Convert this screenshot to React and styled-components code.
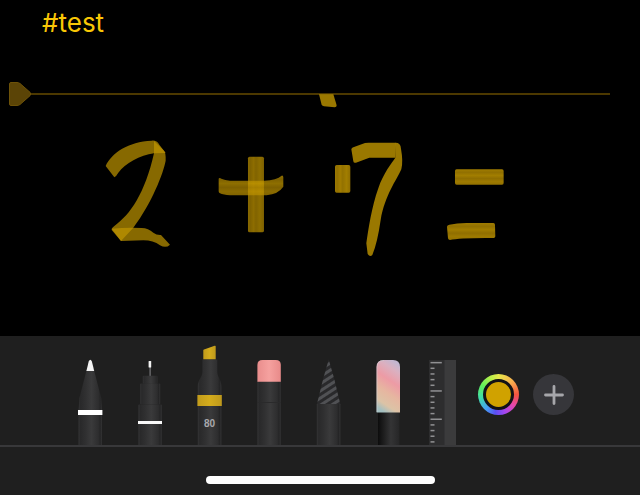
import styled, { createGlobalStyle } from 'styled-components';

const GlobalStyle = createGlobalStyle`
  * {
    box-sizing: border-box;
  }

  body {
    margin: 0;
    background: #000;
    font-family: Inter, 'Liberation Sans', sans-serif;
  }
`;

const Page = styled.div`
  display: flex;
  flex-direction: column;
  min-height: 100vh;
`;

const Note = styled.main`
  flex: 1;
  background: #000;
`;

const TagLine = styled.p`
  margin: 0;
  padding: 6px 42px 0;
  height: 82px;
  font-size: 26px;
  line-height: 34px;
`;

const Tag = styled.a`
  color: #f9c706;
  text-decoration: none;
`;

const Divider = styled.div`
  display: flex;
  align-items: center;
  height: 24px;
  padding: 0 30px 0 9px;
`;

const Handle = styled.svg`
  width: 22px;
  height: 24px;
`;

const Rule = styled.div`
  flex: 1;
  height: 2px;
  background: #4c3800;
`;

const Drawing = styled.svg`
  display: block;
  width: 100%;
  margin-top: -12px;
`;

const Toolbar = styled.div`
  display: flex;
  justify-content: center;
  align-items: center;
  padding-left: 10px;
  background: #1f1f1f;
  border-bottom: 2px solid #38383a;
`;

const Pens = styled.div`
  display: flex;
  justify-content: space-between;
  width: 326px;
  margin-right: 27px;
`;

const ToolButton = styled.button`
  display: block;
  padding: 0;
  border: 0;
  background: none;
  cursor: pointer;

  svg {
    display: block;
  }
`;

const Pickers = styled.div`
  display: flex;
  gap: 14px;
  margin: 8px 0 0 22px;
`;

const ColorButton = styled.button`
  display: grid;
  place-items: center;
  width: 41px;
  height: 41px;
  padding: 5px;
  border: 0;
  border-radius: 50%;
  background: conic-gradient(
    #e6e84a,
    #f8b04e 45deg,
    #f4553f 90deg,
    #e646a8 125deg,
    #a446f0 160deg,
    #5a50f4 190deg,
    #45a0f5 220deg,
    #40dca8 260deg,
    #62f05a 300deg,
    #b8f04a 335deg,
    #e6e84a
  );
`;

const Swatch = styled.span`
  width: 31px;
  height: 31px;
  border: 3px solid #121216;
  border-radius: 50%;
  background: ${(props) => props.$color};
`;

const AddButton = styled.button`
  display: grid;
  place-items: center;
  width: 41px;
  height: 41px;
  padding: 0;
  border: 0;
  border-radius: 50%;
  background: #36363a;
`;

const HomeArea = styled.footer`
  display: flex;
  justify-content: center;
  height: 48px;
  padding-top: 29px;
  background: #1f1f1f;
`;

const HomeIndicator = styled.div`
  width: 229px;
  height: 8px;
  border-radius: 4px;
  background: #fff;
`;

const SharedDefs = styled.svg`
  position: absolute;
  width: 0;
  height: 0;
`;

function Gradients() {
  return (
    <SharedDefs aria-hidden='true'>
      <defs>
        <linearGradient id='barrel'>
          <stop offset='0' stopColor='#343435' />
          <stop offset='0.08' stopColor='#29292a' />
          <stop offset='0.3' stopColor='#303031' />
          <stop offset='0.55' stopColor='#3a3a3b' />
          <stop offset='0.85' stopColor='#2d2d2e' />
          <stop offset='0.92' stopColor='#252526' />
          <stop offset='1' stopColor='#333334' />
        </linearGradient>
        <linearGradient id='darkBarrel'>
          <stop offset='0' stopColor='#0c0c0c' />
          <stop offset='0.6' stopColor='#343435' />
          <stop offset='1' stopColor='#262627' />
        </linearGradient>
        <linearGradient id='ink'>
          <stop offset='0' stopColor='#c19b1b' />
          <stop offset='0.5' stopColor='#d4ac1c' />
          <stop offset='1' stopColor='#be991c' />
        </linearGradient>
        <linearGradient id='rubber'>
          <stop offset='0' stopColor='#e98d8c' />
          <stop offset='0.5' stopColor='#f5a19f' />
          <stop offset='1' stopColor='#e88a89' />
        </linearGradient>
        <linearGradient id='mix' x1='0.65' y1='0' x2='0.35' y2='1'>
          <stop offset='0' stopColor='#c3b6d0' />
          <stop offset='0.15' stopColor='#dbb0c0' />
          <stop offset='0.38' stopColor='#ed9ba5' />
          <stop offset='0.62' stopColor='#e6b6a0' />
          <stop offset='0.85' stopColor='#dcc3a6' />
          <stop offset='1' stopColor='#a3bfc0' />
        </linearGradient>
        <pattern id='hatch' width='28' height='6' patternUnits='userSpaceOnUse' patternTransform='rotate(-33)'>
          <rect width='28' height='6' fill='#29292b' />
          <rect width='28' height='3' fill='#505154' />
        </pattern>
      </defs>
    </SharedDefs>
  );
}

function Pen() {
  return (
    <>
      <path d='M10.6 34H18L25.2 62L26 74H2.6L3.4 62Z' fill='url(#barrel)' />
      <path d='M10.4 35L12.7 25.5Q14.3 22.2 15.9 25.5L18.2 35Z' fill='#f3f3f3' />
      <rect x='2.5' y='79' width='23.5' height='31' fill='url(#barrel)' />
      <rect x='2' y='74' width='24.4' height='5' fill='#fff' />
    </>
  );
}

function FineLiner() {
  return (
    <>
      <rect x='13.5' y='30' width='1.2' height='10' fill='#77777a' />
      <rect x='12.6' y='25' width='2.6' height='6.5' rx='0.5' fill='#f3f3f3' />
      <rect x='6.8' y='39.7' width='14.6' height='8' rx='1' fill='url(#barrel)' />
      <rect x='4.2' y='47.4' width='20' height='21' rx='1' fill='url(#barrel)' />
      <rect x='2.4' y='68.4' width='23.4' height='42' rx='1' fill='url(#barrel)' />
      <rect x='2' y='85' width='24' height='3' fill='#f8f8f8' />
    </>
  );
}

function Marker() {
  return (
    <>
      <path d='M8.3 14.3Q8.4 13.8 9 13.6L19.7 9.7Q20.7 9.4 20.7 10.4V23.6H8.3Z' fill='url(#ink)' />
      <path d='M7.4 23.5H22.3V36C22.5 42 26.4 43 26.4 51V110H2.8V51C2.8 43 7.2 42 7.4 36Z' fill='url(#barrel)' />
      <rect x='2.4' y='59' width='24.4' height='11' fill='url(#ink)' />
      <text x='14.6' y='91' textAnchor='middle' fontSize='10' fontWeight='700' fontFamily='Liberation Sans' fill='#a8a8ac'>
        80
      </text>
    </>
  );
}

function Eraser() {
  return (
    <>
      <rect x='2.4' y='45' width='23.4' height='65' fill='url(#barrel)' />
      <path d='M2.4 45.7V29Q2.4 24 7.4 24H20.8Q25.8 24 25.8 29V45.7Z' fill='url(#rubber)' />
      <rect x='2.4' y='66' width='23.4' height='1' fill='#2a2a2b' />
    </>
  );
}

function Pencil() {
  return (
    <>
      <path d='M14.7 23.5L20 42L26.4 68.5H2.8L9.4 42Z' fill='url(#hatch)' />
      <rect x='2.8' y='68' width='23.6' height='42' fill='url(#barrel)' />
    </>
  );
}

function MixBrush() {
  return (
    <>
      <rect x='4' y='76' width='21.4' height='34' fill='url(#darkBarrel)' />
      <path d='M2.6 76.6V31Q2.6 24 9.6 24H19Q26 24 26 31V76.6Z' fill='url(#mix)' />
      <path d='M3 76V31Q3 24.5 9.6 24.5' fill='none' stroke='#d2d2d8' strokeOpacity='0.6' />
    </>
  );
}

const pens = [
  { name: 'Pen', Shape: Pen },
  { name: 'Fine liner', Shape: FineLiner },
  { name: 'Marker', Shape: Marker },
  { name: 'Eraser', Shape: Eraser },
  { name: 'Pencil', Shape: Pencil },
  { name: 'Mix brush', Shape: MixBrush },
];

function Ruler() {
  const ticks = Array.from({ length: 15 }, (_, i) => i);

  return (
    <svg width='27' height='109' viewBox='0 0 27 109'>
      <rect y='24' width='16' height='85' fill='#2d2d2e' />
      <rect x='15.5' y='24' width='11.5' height='85' fill='#3b3b3c' />
      {ticks.map((i) => (
        <rect
          key={i}
          x='1.5'
          y={25.9 + i * 5.66}
          width={i % 5 === 0 ? 11.3 : 4}
          height='1.5'
          fill='#919193'
        />
      ))}
    </svg>
  );
}

function Handwriting() {
  return (
    <Drawing viewBox='0 94 640 242' role='img' aria-label='2 + 7 ='>
      <defs>
        {/* marker ink bleeds a little at its edges */}
        <filter id='bleed' x='-5%' y='-5%' width='110%' height='110%'>
          <feGaussianBlur stdDeviation='1.6' />
        </filter>
        <linearGradient id='grainX' x2='1' y2='0'>
          <stop offset='0' stopColor='#c29609' />
          <stop offset='0.15' stopColor='#b68c00' />
          <stop offset='0.35' stopColor='#c99b00' />
          <stop offset='0.5' stopColor='#b88e00' />
          <stop offset='0.75' stopColor='#ca9d00' />
          <stop offset='1' stopColor='#b48a00' />
        </linearGradient>
        <linearGradient id='grainY' x2='0' y2='1'>
          <stop offset='0' stopColor='#c89b04' />
          <stop offset='0.2' stopColor='#b68c00' />
          <stop offset='0.4' stopColor='#ca9d00' />
          <stop offset='0.6' stopColor='#b48a00' />
          <stop offset='0.8' stopColor='#c59800' />
          <stop offset='1' stopColor='#b88e00' />
        </linearGradient>
      </defs>

      {/* 2 and + */}
      <g transform='translate(90 130) scale(0.3333)' fill='#c09600' fillOpacity='0.7' filter='url(#bleed)'>
        <path d='M47 108C65 68 115 35 185 32Q200 30 208 44L227 69L192 70C150 76 105 100 85 128Q78 140 73 142Z' />
        <path d='M192 33L222 62Q228 68 227 92C220 130 185 220 130 293L93 333L65 300Q64 294 74 287C120 255 165 190 192 70Z' />
        <path d='M65 296Q110 292 155 294Q175 294 190 308Q200 316 213 315L240 344Q228 356 210 346Q190 331 160 331L93 333Z' />
        <rect x='474' y='80' width='48' height='227' rx='5' fill='url(#grainX)' />
        <path
          d='M386 146Q388 142 394 146Q405 151 420 152H522Q560 150 575 137Q580 136 580 142V170Q565 192 530 196H420Q400 195 390 190Q386 188 386 184Z'
          fill='url(#grainY)'
        />
      </g>

      {/* 7 and = */}
      <g transform='translate(310 80) scale(0.3333)' fill='#c09600' fillOpacity='0.8' filter='url(#bleed)'>
        <path d='M27 43H70L80 76Q80 82 74 82L42 79Q37 78 35 74Z' />
        <rect x='75' y='255' width='46' height='83' rx='5' fill='url(#grainX)' />
        <path d='M124 208Q125 204 130 202L165 189Q170 188 176 188H258L257 233H178L138 248Q131 250 130 244Z' />
        <path d='M257 188Q272 188 273 206Q280 245 274 268C260 300 225 345 212 420Q202 490 187 525Q180 533 173 522L169 490C175 450 185 380 205 325C220 280 245 250 257 232Z' />
        <rect x='435' y='268' width='146' height='46' rx='5' fill='url(#grainY)' />
        <path
          d='M411 440Q411 435 418 434Q440 429 470 429H550Q555 429 555 434L556 469Q556 474 551 474Q450 473 420 480Q415 480 414 475Z'
          fill='url(#grainY)'
        />
      </g>
    </Drawing>
  );
}

function App() {
  return (
    <Page>
      <GlobalStyle />
      <Gradients />

      <Note>
        <TagLine>
          <Tag href='#test'>#test</Tag>
        </TagLine>
        <Divider>
          <Handle viewBox='0 0 22 24'>
            <path
              d='M2 0.5H8Q9.5 0.5 11 1.5L21 10.3Q22.5 12 21 13.7L11 22.5Q9.5 23.5 8 23.5H2Q0.5 23.5 0.5 22V2Q0.5 0.5 2 0.5Z'
              fill='#5b4406'
              stroke='#6d5208'
            />
          </Handle>
          <Rule />
        </Divider>
        <Handwriting />
      </Note>

      <Toolbar>
        <Pens>
          {pens.map(({ name, Shape }) => (
            <ToolButton key={name} aria-label={name}>
              <svg width='28' height='109' viewBox='0 0 28 109'>
                <Shape />
              </svg>
            </ToolButton>
          ))}
        </Pens>
        <ToolButton aria-label='Ruler'>
          <Ruler />
        </ToolButton>
        <Pickers>
          <ColorButton aria-label='Color'>
            <Swatch $color='#d0a200' />
          </ColorButton>
          <AddButton aria-label='Add'>
            <svg width='20' height='20' viewBox='0 0 20 20'>
              <path d='M10 1.5V18.5M1.5 10H18.5' stroke='#a6a6aa' strokeWidth='2.8' strokeLinecap='round' />
            </svg>
          </AddButton>
        </Pickers>
      </Toolbar>

      <HomeArea>
        <HomeIndicator />
      </HomeArea>
    </Page>
  );
}

export default App;
